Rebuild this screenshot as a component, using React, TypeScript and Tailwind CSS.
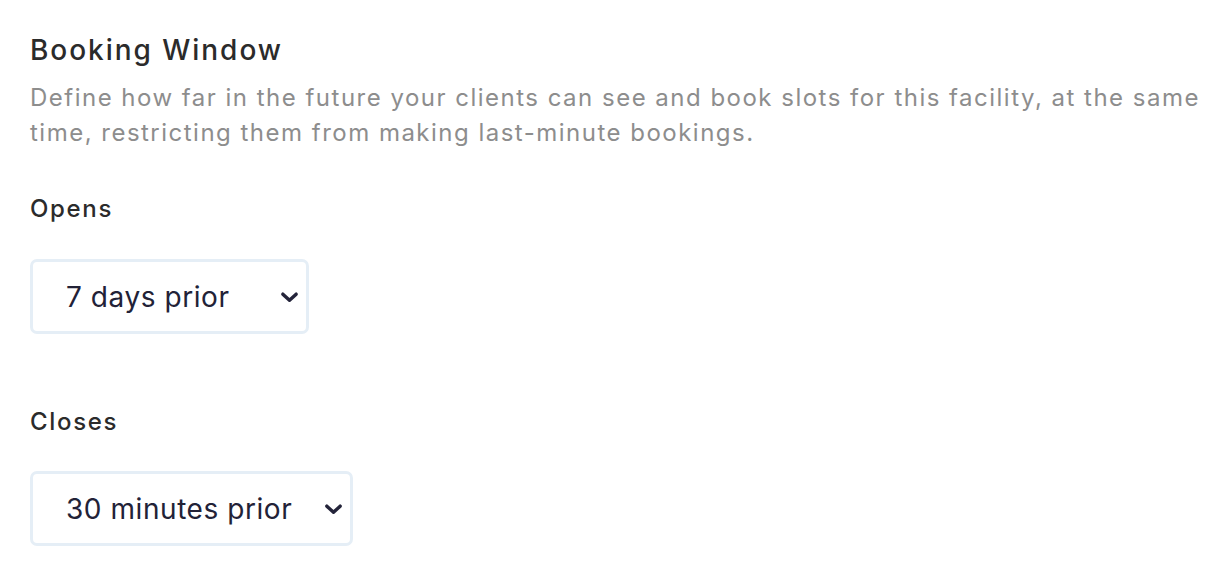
import { useState } from "react";

const OPENS = ["1 day prior", "3 days prior", "7 days prior", "14 days prior", "30 days prior"];
const CLOSES = ["No restriction", "15 minutes prior", "30 minutes prior", "1 hour prior", "2 hours prior"];

function Chevron() {
  return (
    <svg
      viewBox="0 0 20 12"
      className="pointer-events-none absolute right-[10px] top-1/2 h-[12px] w-[19px] -translate-y-1/2"
      fill="none"
      stroke="#24243a"
      strokeWidth={3.6}
      strokeLinecap="round"
      strokeLinejoin="round"
    >
      <path d="M3 3l7 6.5L17 3" />
    </svg>
  );
}

function Select({
  value,
  options,
  onChange,
  width,
}: {
  value: string;
  options: string[];
  onChange: (v: string) => void;
  width: string;
}) {
  return (
    <div className={`relative ${width}`}>
      <select
        value={value}
        onChange={(e) => onChange(e.target.value)}
        className="h-[75px] w-full appearance-none rounded-[7px] border-[3px] border-[#e5eef6] bg-white pl-[33px] pr-[40px] text-[28px] tracking-[0.02em] text-[#222237] outline-none"
      >
        {options.map((o) => (
          <option key={o} value={o}>
            {o}
          </option>
        ))}
      </select>
      <Chevron />
    </div>
  );
}

export default function App() {
  const [opens, setOpens] = useState("7 days prior");
  const [closes, setCloses] = useState("30 minutes prior");

  return (
    <div className="min-h-screen bg-white pl-[30px] pt-[32px] font-['Inter',sans-serif]">
      <h2 className="text-[28px] font-medium leading-[36px] tracking-[0.07em] text-[#2b2b2b]">
        Booking Window
      </h2>
      <p className="mt-[12px] w-[1196px] text-[24px] leading-[35px] tracking-[0.062em] text-[#8d8d8d]">
        Define how far in the future your clients can see and book slots for this facility, at the same
        time, restricting them from making last-minute bookings.
      </p>

      <div className="mt-[44px] text-[24px] font-medium leading-[30px] tracking-[0.07em] text-[#2b2b2b]">
        Opens
      </div>
      <div className="mt-[35px]">
        <Select value={opens} options={OPENS} onChange={setOpens} width="w-[279px]" />
      </div>

      <div className="mt-[73px] text-[24px] font-medium leading-[30px] tracking-[0.07em] text-[#2b2b2b]">
        Closes
      </div>
      <div className="mt-[34px]">
        <Select value={closes} options={CLOSES} onChange={setCloses} width="w-[323px]" />
      </div>
    </div>
  );
}
